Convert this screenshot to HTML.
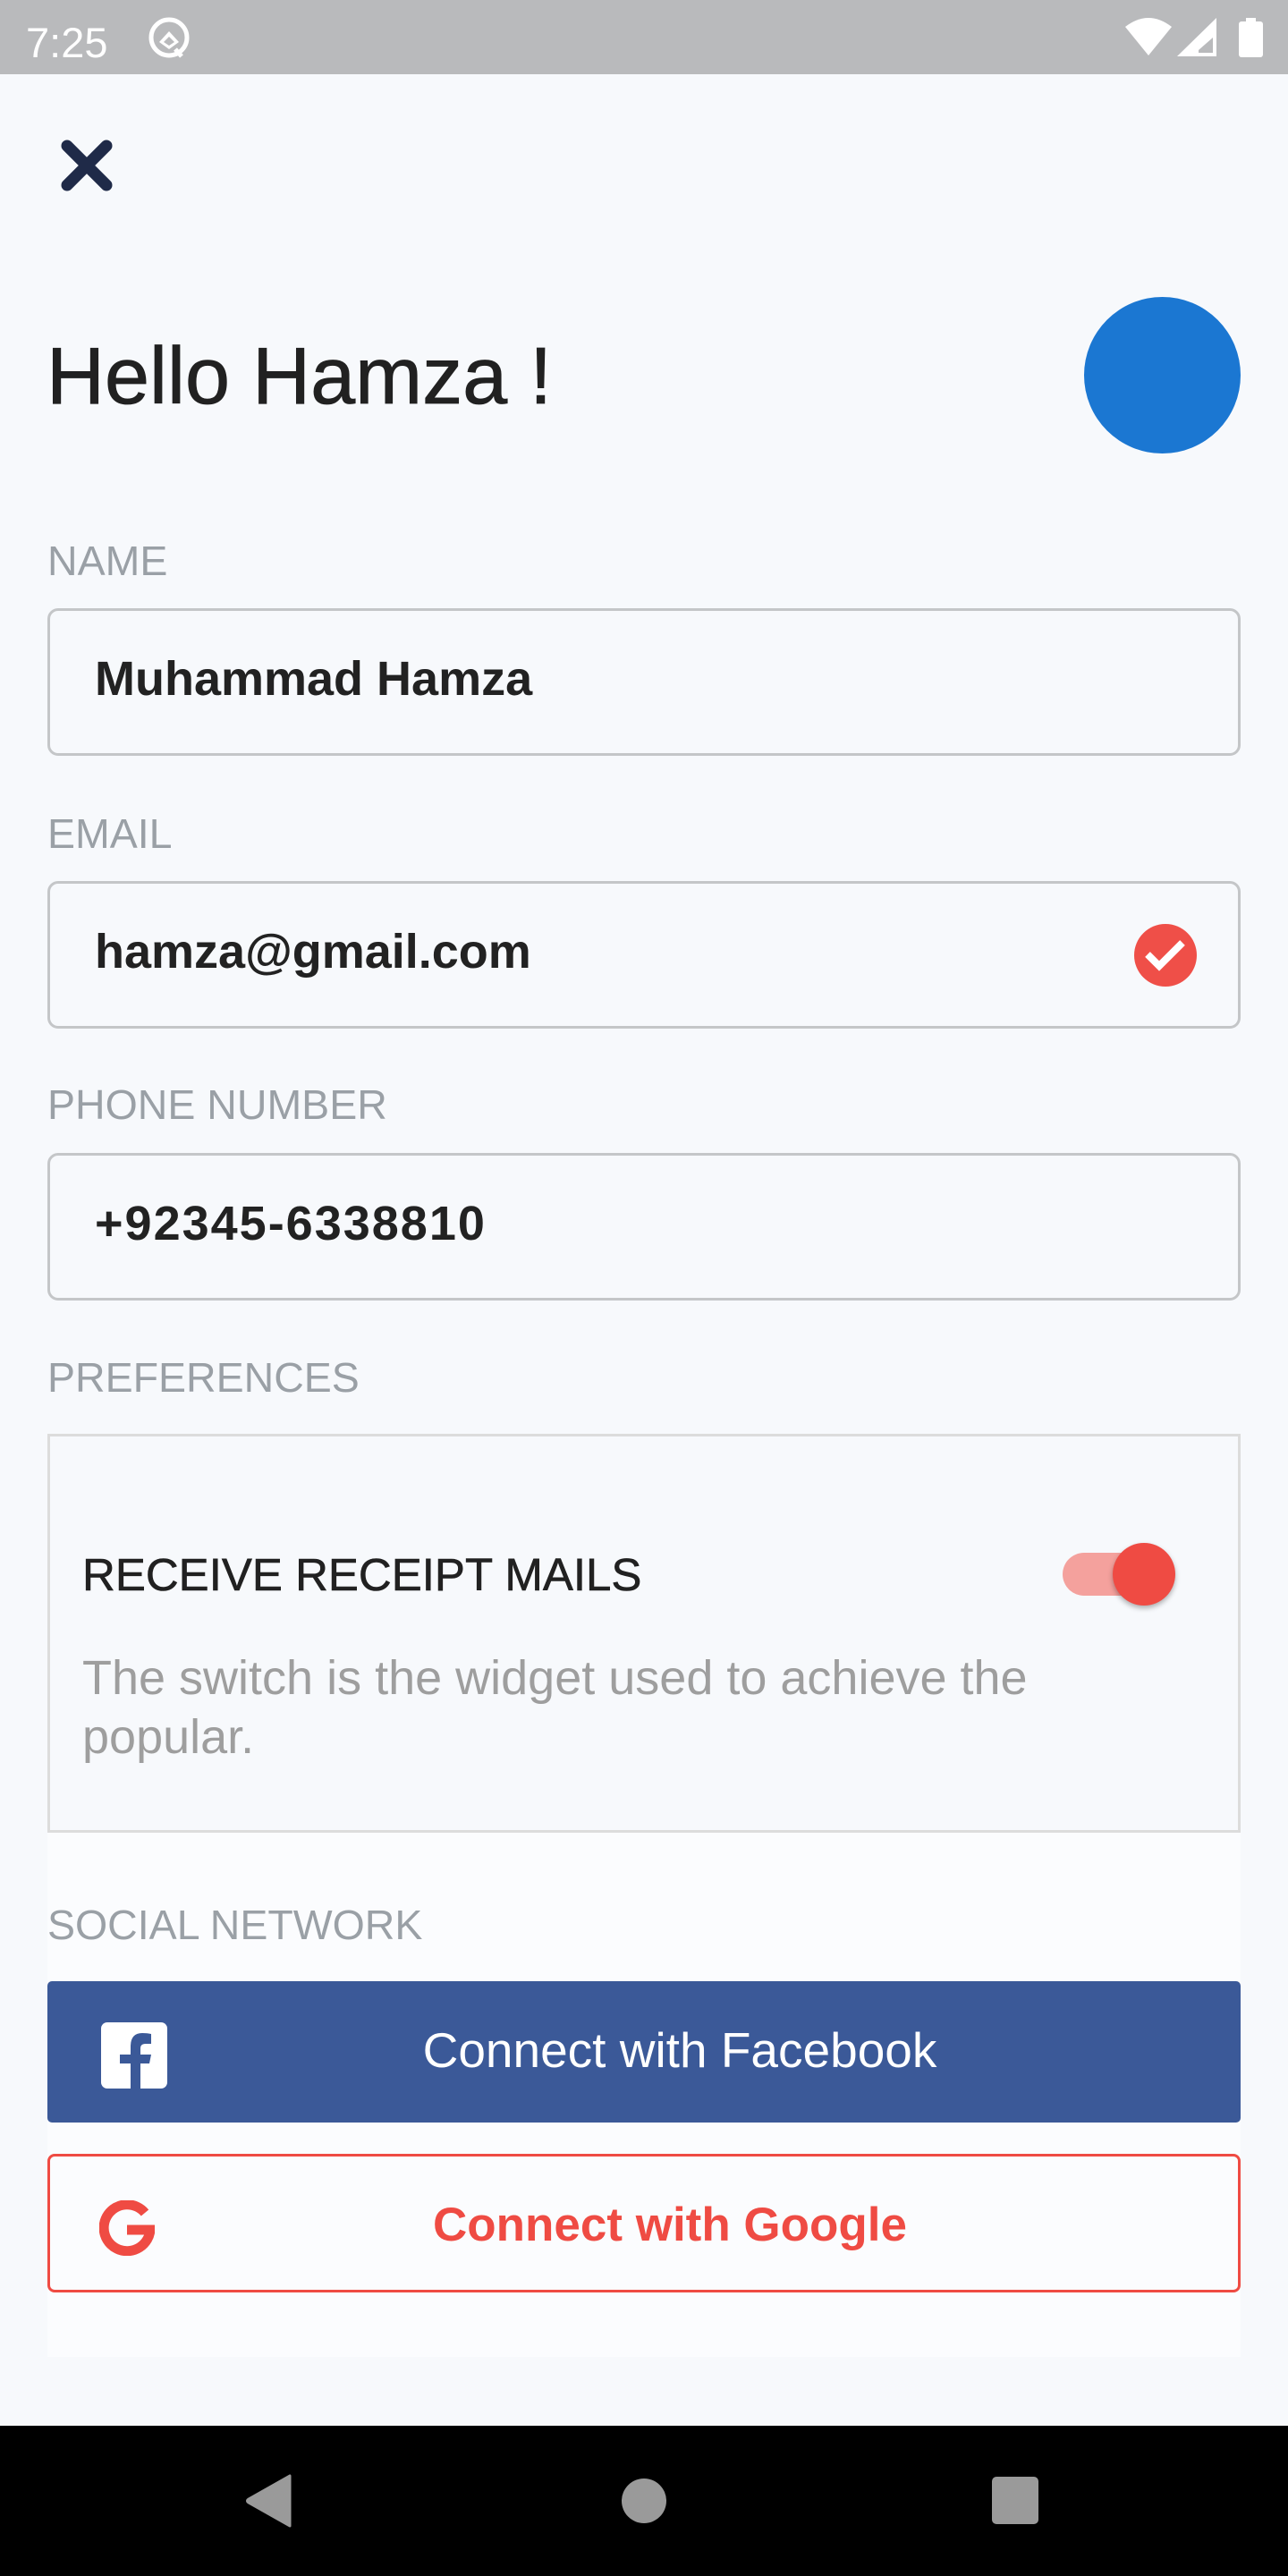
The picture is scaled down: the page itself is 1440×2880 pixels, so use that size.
<!DOCTYPE html>
<html><head><meta charset="utf-8"><style>
*{margin:0;padding:0;box-sizing:border-box}
html,body{width:1440px;height:2880px;overflow:hidden;background:#f7f9fc;font-family:"Liberation Sans",sans-serif}
.a{position:absolute}
.lbl{position:absolute;left:53px;font-size:46.5px;color:#9aa0a6;line-height:1}
.inp{position:absolute;left:53px;width:1334px;height:165px;border:3px solid #c4c6c8;border-radius:12px}
.it{position:absolute;left:106px;font-size:54px;font-weight:bold;color:#222;line-height:1}
</style></head><body>
<div class="a" style="left:53px;top:2048px;width:1334px;height:587px;background:#fbfcfe"></div>
<div class="a" style="left:0;top:0;width:1440px;height:83px;background:#b9babc"></div>
<div class="a" style="left:29px;top:24px;font-size:47px;color:#fff;line-height:1">7:25</div>
<svg class="a" style="left:163px;top:17px" width="52" height="52" viewBox="0 0 52 52"><circle cx="26" cy="25" r="20" fill="none" stroke="#fff" stroke-width="5"/><path d="M15 30 L26 18 L37 30 L26 38 Z" fill="#fff"/><path d="M20 30 L26 24 L32 30 L26 34Z" fill="#b9babc"/><path d="M33 38 L40 46" stroke="#fff" stroke-width="5"/></svg>
<svg class="a" style="left:1256px;top:18px" width="160" height="48" viewBox="0 0 160 48"><path d="M2 12 Q28 -8 54 12 L28 44 Z" fill="#fff"/><path d="M60 45 L104 2 L104 45 Z" fill="#fff"/><path d="M84 41 L100 41 L100 24 L84 38Z" fill="#b9babc"/><rect x="129" y="6" width="27" height="40" rx="3" fill="#fff"/><rect x="137" y="2" width="11" height="6" fill="#fff"/></svg>
<svg class="a" style="left:68px;top:156px" width="58" height="58" viewBox="0 0 58 58"><path d="M7 7 L51 51 M51 7 L7 51" stroke="#1f2a48" stroke-width="13" stroke-linecap="round"/></svg>
<div class="a" style="left:52px;top:376px;font-size:90px;color:#212121;line-height:1;-webkit-text-stroke:0.8px #212121">Hello Hamza !</div>
<div class="a" style="left:1212px;top:332px;width:175px;height:175px;border-radius:50%;background:#1b77d2"></div>

<div class="lbl" style="top:604px">NAME</div>
<div class="inp" style="top:680px"></div>
<div class="it" style="top:732px">Muhammad Hamza</div>

<div class="lbl" style="top:909px">EMAIL</div>
<div class="inp" style="top:985px"></div>
<div class="it" style="top:1037px">hamza@gmail.com</div>
<svg class="a" style="left:1268px;top:1033px" width="70" height="70" viewBox="0 0 70 70"><circle cx="35" cy="35" r="35" fill="#ef4f48"/><path d="M15 34 L28 47 L54 21" fill="none" stroke="#fff" stroke-width="8"/></svg>

<div class="lbl" style="top:1212px">PHONE NUMBER</div>
<div class="inp" style="top:1289px"></div>
<div class="it" style="top:1341px;letter-spacing:2px">+92345-6338810</div>

<div class="lbl" style="top:1517px">PREFERENCES</div>
<div class="a" style="left:53px;top:1603px;width:1334px;height:446px;border:3px solid #dcdcdc"></div>
<div class="a" style="left:92px;top:1735px;font-size:51px;color:#212121;line-height:1;-webkit-text-stroke:0.6px #212121">RECEIVE RECEIPT MAILS</div>
<div class="a" style="left:1188px;top:1736px;width:96px;height:48px;border-radius:24px;background:#f4a19d"></div>
<div class="a" style="left:1244px;top:1725px;width:70px;height:70px;border-radius:50%;background:#ef4b43;box-shadow:0 3px 6px rgba(0,0,0,.3)"></div>
<div class="a" style="left:92px;top:1843px;width:1200px;font-size:54px;color:#9e9e9e;line-height:66px">The switch is the widget used to achieve the<br>popular.</div>

<div class="lbl" style="top:2129px">SOCIAL NETWORK</div>
<div class="a" style="left:53px;top:2215px;width:1334px;height:158px;background:#3b5998;border-radius:5px"></div>
<svg class="a" style="left:113px;top:2261px" width="74" height="74" viewBox="0 0 74 74"><rect width="74" height="74" rx="7" fill="#fff"/><path d="M44 74 L44 46 L54 46 L56 36 L44 36 L44 29 Q44 24 50 24 L56 24 L56 13 Q52 12 46 12 Q33 12 33 27 L33 36 L21 36 L21 46 L33 46 L33 74Z" fill="#3b5998"/></svg>
<div class="a" style="left:53px;top:2265px;width:1414px;text-align:center;font-size:55px;color:#fff;line-height:1">Connect with Facebook</div>
<div class="a" style="left:53px;top:2408px;width:1334px;height:155px;border:3px solid #ef4b43;border-radius:8px"></div>
<svg class="a" style="left:111px;top:2460px" width="62" height="62" viewBox="0 0 62 62"><path d="M51 14 A26 26 0 1 0 57 33 L31 33" fill="none" stroke="#ef4b43" stroke-width="11"/></svg>
<div class="a" style="left:53px;top:2461px;width:1392px;text-align:center;font-size:53px;font-weight:bold;color:#ef4b43;line-height:1">Connect with Google</div>

<div class="a" style="left:0;top:2712px;width:1440px;height:168px;background:#000"></div>
<svg class="a" style="left:274px;top:2766px" width="54" height="60" viewBox="0 0 54 60"><path d="M50 2 L50 58 L4 32 Q1 30 4 28 Z" fill="#9a9a9a" stroke="#9a9a9a" stroke-width="3" stroke-linejoin="round"/></svg>
<div class="a" style="left:695px;top:2771px;width:50px;height:50px;border-radius:50%;background:#9a9a9a"></div>
<div class="a" style="left:1109px;top:2769px;width:52px;height:53px;border-radius:5px;background:#9a9a9a"></div>
</body></html>
